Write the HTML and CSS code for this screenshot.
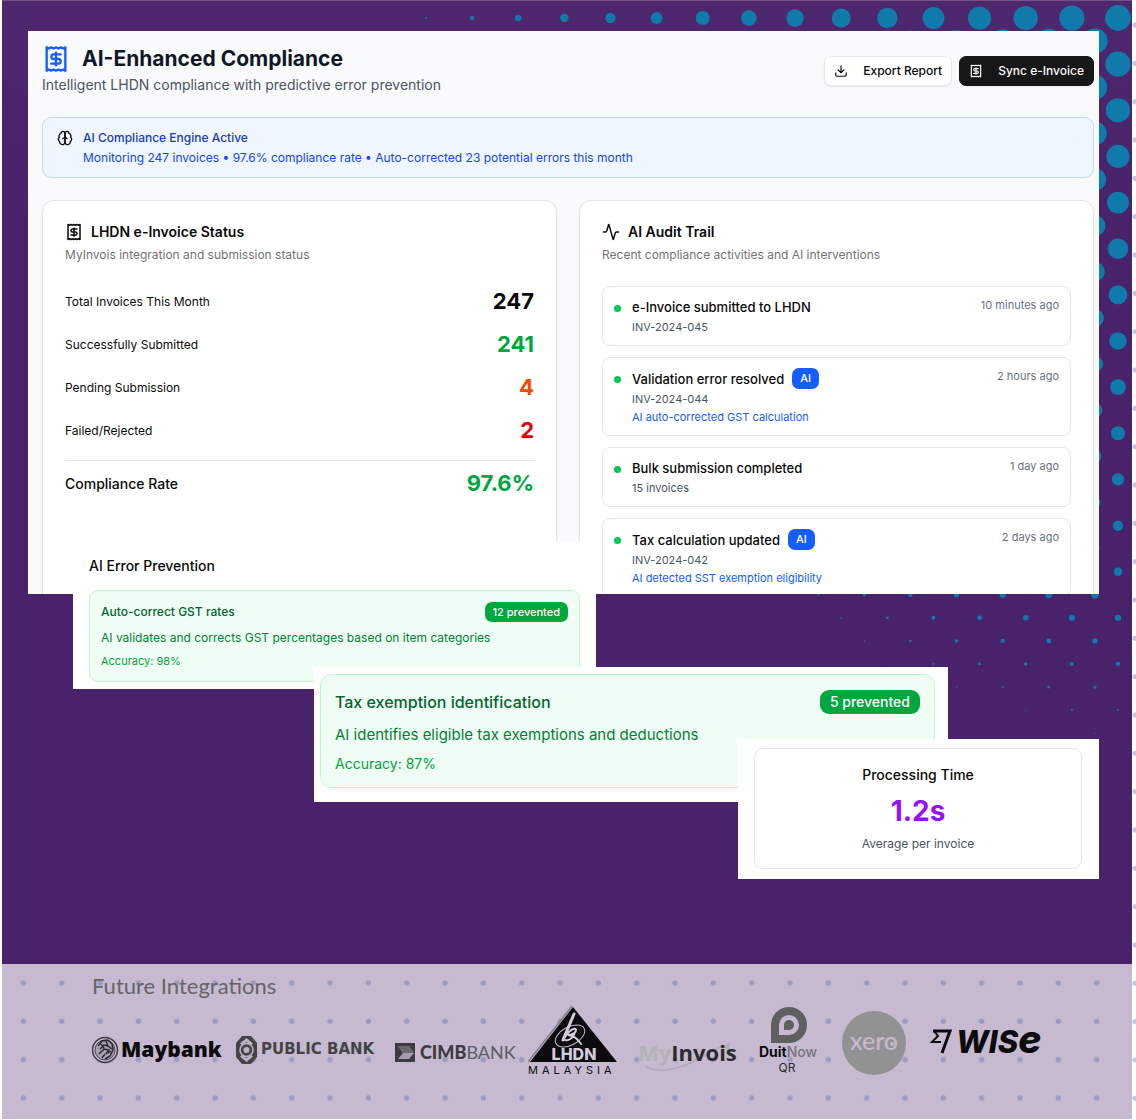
FILE: index.html
```
<!DOCTYPE html>
<html lang="en">
<head>
<meta charset="UTF-8">
<meta name="viewport" content="width=device-width, initial-scale=1">
<title>AI-Enhanced Compliance</title>
<link rel="stylesheet" href="styles.css">
</head>
<body>

<!-- shared icon shapes -->
<svg class="defs" width="0" height="0" aria-hidden="true">
  <symbol id="receipt" viewBox="0 0 24 24">
    <path d="M4 2v20l2-1 2 1 2-1 2 1 2-1 2 1 2-1 2 1V2l-2 1-2-1-2 1-2-1-2 1-2-1-2 1Z"/>
    <path d="M16 8h-6a2 2 0 1 0 0 4h4a2 2 0 1 1 0 4H8"/>
    <path d="M12 17.500v-11"/>
  </symbol>
</svg>

<!-- Dotted paper behind the poster -->
<svg class="paper" aria-hidden="true">
  <pattern id="paper-dots" x="1116" y="6" width="38.330" height="38.330" patternUnits="userSpaceOnUse">
    <circle cx="19" cy="19" r="2.600" fill="#c3c6db"/>
  </pattern>
  <rect width="100%" height="100%" fill="url(#paper-dots)"/>
</svg>

<div class="poster">
  <svg class="halftone" id="halftone" width="760" height="760" aria-hidden="true"></svg>

  <main class="stage">

    <!-- Dashboard -->
    <section class="dashboard">
      <header class="page-head">
        <div>
          <h1><svg class="icon icon-xl" aria-hidden="true"><use href="#receipt"/></svg>AI-Enhanced Compliance</h1>
          <p class="lead">Intelligent LHDN compliance with predictive error prevention</p>
        </div>
        <div class="actions">
          <button class="btn" type="button">
            <svg class="icon" viewBox="0 0 24 24" aria-hidden="true"><path d="M21 15v4a2 2 0 0 1-2 2H5a2 2 0 0 1-2-2v-4M7 10l5 5 5-5M12 15V3"/></svg>
            Export Report
          </button>
          <button class="btn btn-dark" type="button">
            <svg class="icon" aria-hidden="true"><use href="#receipt"/></svg>
            Sync e-Invoice
          </button>
        </div>
      </header>

      <div class="alert">
        <svg class="icon" viewBox="0 0 24 24" aria-hidden="true">
          <path d="M12 5a3 3 0 1 0-5.997.125 4 4 0 0 0-2.526 5.770 4 4 0 0 0 .556 6.588A4 4 0 1 0 12 18Z"/>
          <path d="M12 5a3 3 0 1 1 5.997.125 4 4 0 0 1 2.526 5.770 4 4 0 0 1-.556 6.588A4 4 0 1 1 12 18Z"/>
          <path d="M15 13a4.500 4.500 0 0 1-3-4 4.500 4.500 0 0 1-3 4"/>
        </svg>
        <div>
          <strong>AI Compliance Engine Active</strong>
          <p>Monitoring 247 invoices • 97.6% compliance rate • Auto-corrected 23 potential errors this month</p>
        </div>
      </div>

      <div class="cards">
        <article class="card">
          <h2><svg class="icon icon-md" aria-hidden="true"><use href="#receipt"/></svg>LHDN e-Invoice Status</h2>
          <p class="desc">MyInvois integration and submission status</p>
          <dl class="stats">
            <div><dt>Total Invoices This Month</dt><dd>247</dd></div>
            <div><dt>Successfully Submitted</dt><dd class="green">241</dd></div>
            <div><dt>Pending Submission</dt><dd class="orange">4</dd></div>
            <div><dt>Failed/Rejected</dt><dd class="red">2</dd></div>
            <div class="total"><dt>Compliance Rate</dt><dd class="green">97.6%</dd></div>
          </dl>
        </article>

        <article class="card">
          <h2><svg class="icon icon-md" viewBox="0 0 24 24" aria-hidden="true"><path d="M22 12h-2.480a2 2 0 0 0-1.930 1.460l-2.350 8.360a.25.25 0 0 1-.48 0L9.240 2.180a.25.25 0 0 0-.48 0l-2.350 8.360A2 2 0 0 1 4.490 12H2"/></svg>AI Audit Trail</h2>
          <p class="desc">Recent compliance activities and AI interventions</p>
          <ul class="trail">
            <li>
              <i class="dot"></i>
              <div class="entry"><h3>e-Invoice submitted to LHDN</h3><p>INV-2024-045</p></div>
              <time>10 minutes ago</time>
            </li>
            <li>
              <i class="dot"></i>
              <div class="entry"><h3>Validation error resolved <span class="tag">AI</span></h3><p>INV-2024-044</p><p class="note">AI auto-corrected GST calculation</p></div>
              <time>2 hours ago</time>
            </li>
            <li>
              <i class="dot"></i>
              <div class="entry"><h3>Bulk submission completed</h3><p>15 invoices</p></div>
              <time>1 day ago</time>
            </li>
            <li>
              <i class="dot"></i>
              <div class="entry"><h3>Tax calculation updated <span class="tag">AI</span></h3><p>INV-2024-042</p><p class="note">AI detected SST exemption eligibility</p></div>
              <time>2 days ago</time>
            </li>
          </ul>
        </article>
      </div>
    </section>

    <!-- Overlapping callouts -->
    <section class="callout prevention">
      <h2>AI Error Prevention</h2>
      <div class="rule">
        <div class="rule-head"><h3>Auto-correct GST rates</h3><span class="badge">12 prevented</span></div>
        <p>AI validates and corrects GST percentages based on item categories</p>
        <small>Accuracy: 98%</small>
      </div>
    </section>

    <section class="callout exemption">
      <div class="rule rule-lg">
        <div class="rule-head"><h3>Tax exemption identification</h3><span class="badge">5 prevented</span></div>
        <p>AI identifies eligible tax exemptions and deductions</p>
        <small>Accuracy: 87%</small>
      </div>
    </section>

    <section class="callout timing">
      <div class="metric">
        <h3>Processing Time</h3>
        <strong>1.2s</strong>
        <p>Average per invoice</p>
      </div>
    </section>
  </main>

  <!-- Future integrations -->
  <footer class="integrations">
    <svg class="footer-dots" aria-hidden="true">
      <pattern id="footer-dots" x="2.400" y="0" width="38.330" height="38.330" patternUnits="userSpaceOnUse">
        <circle cx="19" cy="19" r="2.700" fill="#9d9bbf"/>
      </pattern>
      <rect width="100%" height="100%" fill="url(#footer-dots)"/>
    </svg>
    <h2>Future Integrations</h2>
    <div class="logos">
      <svg width="133" height="76" role="img" aria-label="Maybank">
        <circle cx="13" cy="46" r="12.500" fill="#c6b9d0" stroke="#3c3742" stroke-width="1.500"/>
        <circle cx="13" cy="46" r="10" fill="#aaa0b3" stroke="#4b4552" stroke-width="1"/>
        <path d="M6 42l4-5 6-1 4 4 1 6-3 6-5 3M8 45l4-4 4 1M7 50l5-5 5 1-3 4M10 54l3-4M14 37l2 5 4 3M16 49l3-2M9 40l3 4" fill="none" stroke="#2c2831" stroke-width="1.500"/>
        <text x="29" y="53" class="t-maybank">Maybank</text>
      </svg>
      <svg width="147" height="76" role="img" aria-label="Public Bank">
        <path d="M7 32h9l6 7v14l-6 7H7l-6-7V39Z" fill="#444346"/>
        <path d="M11.500 34l6.500 5.500-2 1.500-4.500-3-4.500 3-2-1.500ZM11.500 58l6.500-5.500-2-1.500-4.500 3-4.500-3-2 1.500Z" fill="#bdb1c6"/>
        <circle cx="11.500" cy="46" r="6.500" fill="#444346" stroke="#bdb1c6" stroke-width="1.500"/>
        <circle cx="11.500" cy="46" r="3" fill="#bdb1c6"/>
        <text x="26" y="50" class="t-public">PUBLIC BANK</text>
      </svg>
      <svg width="126" height="76" role="img" aria-label="CIMB Bank">
        <path d="M3 39h20v19H3Z" fill="#3d3b40"/>
        <path d="M6 42h11l5 7-5 6H6l5-6Z" fill="#a69cae"/>
        <path d="M6 42h11l5 7H11Z" fill="#6c6671"/>
        <text x="28" y="55" class="t-cimb">CIMB<tspan class="t-thin">BANK</tspan></text>
      </svg>
      <svg width="99" height="76" role="img" aria-label="LHDN Malaysia">
        <path d="M44 2L0 58" stroke="#857c8c" stroke-width="1.500"/>
        <path d="M45 3L89 58H2Z" fill="#0c0b0d"/>
        <ellipse cx="42" cy="32" rx="16" ry="9" transform="rotate(-28 42 32)" fill="none" stroke="#c6b9d0" stroke-width="1"/>
        <path d="M46 10L35 36" fill="none" stroke="#d5cbdc" stroke-width="3" stroke-linecap="round"/>
        <path d="M37 33c5-8 11-10 11-7 0 3-5 5-8 5 6 1 9 3 13 9M47 28c-2 7-7 9-10 8" fill="none" stroke="#d5cbdc" stroke-width="2" stroke-linecap="round"/>
        <text x="46" y="56" text-anchor="middle" class="t-lhdn">LHDN</text>
        <text x="0" y="70" class="t-malaysia">MALAYSIA</text>
      </svg>
      <svg width="107" height="76" role="img" aria-label="MyInvois">
        <path d="M9 62c5 6 28 6 46-4 18-9 34-22 35-13M87 43l5-3-1 7" fill="none" stroke="#b3acb9" stroke-width="2"/>
        <text x="1" y="57" class="t-myinvois"><tspan fill="#b3b2b6">My</tspan>Invois</text>
      </svg>
      <svg width="74" height="76" role="img" aria-label="DuitNow QR">
        <path d="M17 39V21a18 18 0 1 1 18 18Z" fill="#5f5e61"/>
        <path d="M25 31V21a10 10 0 1 1 10 10Z" fill="#c6b9d0"/>
        <path d="M30 26v-5a5 5 0 1 1 5 5Z" fill="#5f5e61"/>
        <text x="5" y="53" class="t-duit">Duit<tspan class="t-now">Now</tspan></text>
        <text x="33" y="68" text-anchor="middle" class="t-qr">QR</text>
      </svg>
      <svg width="76" height="76" role="img" aria-label="Xero">
        <circle cx="36" cy="39" r="32" fill="#929293"/>
        <text x="36" y="46" text-anchor="middle" class="t-xero">xero</text>
        <circle cx="54" cy="40" r="2" fill="#c6b9d0"/>
      </svg>
      <svg width="120" height="76" role="img" aria-label="Wise">
        <path d="M9 27H26L18 49" fill="none" stroke="#0c0b0d" stroke-width="3"/>
        <path d="M10 27l4 5-6 6h9" fill="none" stroke="#0c0b0d" stroke-width="2"/>
        <text x="32" y="49" class="t-wise">WIS<tspan class="t-e">e</tspan></text>
      </svg>
    </div>
  </footer>
</div>

<script>
// halftone: dots shrink away from the top right corner
const svg = document.getElementById("halftone");
const step = 23.07;
const reach = 740;

for (let row = 0; row < 33; row++) {
  for (let col = row % 2; col < 33; col += 2) {
    const dx = col * step;
    const dy = row * step;
    const d = Math.pow(Math.pow(dx, 1.6) + Math.pow(dy, 1.6), 1 / 1.6);
    const r = 12.9 * (1 - Math.pow(d / reach, 1.35));
    if (!(r > 0.4)) continue;
    const c = document.createElementNS("http://www.w3.org/2000/svg", "circle");
    c.setAttribute("cx", 746 - dx);
    c.setAttribute("cy", 18 + dy);
    c.setAttribute("r", r);
    svg.appendChild(c);
  }
}
</script>

</body>
</html>
```
FILE: styles.css
```
* { box-sizing: border-box; }

body {
  margin: 0;
  background: white;
  font-family: Inter, sans-serif;
  font-size: 12px;
  line-height: 20px;
  color: #0a0a0a;
}

h1, h2, h3, p, dl, dd, ul { margin: 0; padding: 0; }

.defs { position: absolute; }

.paper {
  position: absolute;
  top: 0;
  left: 0;
  width: 100%;
  height: 100%;
}

.poster {
  position: relative;
  display: flex;
  flex-direction: column;
  min-height: 1119px;
  margin: 0 4px 0 2px;
  border-top: 1px solid #735289;
  background: linear-gradient(#4d286e, #48236b 20%);
}

.halftone {
  position: absolute;
  top: -1px;
  right: 0;
  fill: #107bab;
}

.stage {
  position: relative;
  flex: 1;
  padding: 30px 33px 0 26px;
}

/* Icons */
.icon {
  width: 16px;
  height: 16px;
  flex: none;
  fill: none;
  stroke: currentColor;
  stroke-width: 2;
  stroke-linecap: round;
  stroke-linejoin: round;
}
.icon-md { width: 18px; height: 18px; }
.icon-xl { width: 28px; height: 28px; color: #155dfc; }

/* Dashboard */
.dashboard {
  position: relative;
  height: 563px;
  overflow: hidden;
  padding: 14px 5px 0 14px;
  background: #f9fafb;
}

.page-head {
  display: flex;
  justify-content: space-between;
  align-items: center;
}

h1 {
  display: flex;
  align-items: center;
  gap: 12px;
  font-size: 21px;
  line-height: 28px;
  font-weight: 700;
  color: #101828;
}

.lead {
  font-size: 14px;
  line-height: 24px;
  color: #4a5565;
}

.actions { display: flex; gap: 7px; }

.btn {
  display: flex;
  align-items: center;
  gap: 15px;
  padding: 4px 9px;
  border: 1px solid #e8e8ea;
  border-radius: 7px;
  background: white;
  font: 500 12px/20px Inter, sans-serif;
  color: #0a0a0a;
  box-shadow: 0 1px 2px rgba(0,0,0,0.06);
}
.btn .icon { width: 14px; height: 14px; }
.btn-dark {
  background: #171717;
  border-color: #171717;
  color: #fafafa;
}

.alert {
  display: flex;
  gap: 10px;
  margin-top: 20px;
  padding: 10px 14px 9px;
  border: 1px solid #bedbff;
  border-radius: 9px;
  background: #eff6ff;
  color: #1447e6;
}
.alert .icon { margin-top: 2px; color: #0a0a0a; }
.alert strong {
  display: block;
  font-weight: 500;
  color: #193cb8;
}

.cards {
  display: grid;
  grid-template-columns: 1fr 1fr;
  gap: 22px;
  margin-top: 22px;
}

.card {
  min-height: 480px;
  padding: 20px 22px;
  border: 1px solid #e5e5e5;
  border-radius: 12px;
  background: white;
  box-shadow: 0 1px 3px rgba(0,0,0,0.08);
}
.card h2 {
  display: flex;
  align-items: center;
  gap: 8px;
  font-size: 14px;
  line-height: 22px;
  font-weight: 600;
}
.desc { line-height: 24px; color: #737373; }

.stats { margin-top: 20px; }
.stats div {
  display: flex;
  justify-content: space-between;
  align-items: center;
  margin-bottom: 14px;
}
.stats dd {
  font-size: 22px;
  line-height: 29px;
  font-weight: 700;
}
.stats .total {
  margin-top: 15px;
  padding-top: 8px;
  border-top: 1px solid #e5e5e5;
}
.total dt { font-size: 14px; font-weight: 500; }
.green { color: #00a63e; }
.orange { color: #f54900; }
.red { color: #e7000b; }

.trail {
  display: flex;
  flex-direction: column;
  gap: 11px;
  margin-top: 19px;
  list-style: none;
}
.trail li {
  display: flex;
  gap: 11px;
  padding: 10px 11px 9px;
  border: 1px solid #e5e7eb;
  border-radius: 8px;
}
.dot {
  width: 7px;
  height: 7px;
  margin-top: 8px;
  border-radius: 50%;
  background: #00c950;
}
.entry { flex: 1; font-size: 11px; line-height: 18px; color: #4a5565; }
.entry h3 {
  display: flex;
  align-items: center;
  gap: 8px;
  margin-bottom: 1px;
  font-size: 13px;
  line-height: 20px;
  font-weight: 500;
  color: #0a0a0a;
}
.entry .note { color: #155dfc; }
.tag {
  padding: 1px 8px;
  border-radius: 7px;
  background: #155dfc;
  font-size: 11px;
  line-height: 19px;
  color: white;
}
.trail time { font-size: 11px; line-height: 16px; color: #6a7282; }

/* Callouts */
.callout {
  position: absolute;
  background: white;
}
.prevention {
  top: 541px;
  left: 71px;
  width: 523px;
  padding: 12px 16px 7px;
}
.exemption {
  top: 666px;
  left: 312px;
  width: 634px;
  padding: 7px 13px 14px 6px;
}
.timing {
  top: 738px;
  right: 33px;
  width: 361px;
  padding: 9px 17px 10px 16px;
}

.callout h2 {
  margin-bottom: 12px;
  font-size: 14px;
  line-height: 24px;
  font-weight: 500;
}

.rule {
  padding: 11px;
  border: 1px solid #b9f8cf;
  border-radius: 9px;
  background: #f0fdf4;
  color: #008236;
}
.rule-head {
  display: flex;
  justify-content: space-between;
  align-items: center;
}
.rule h3 {
  font-size: 12px;
  font-weight: 500;
  color: #016630;
}
.rule p { margin: 6px 0 4px; }
.rule small {
  display: block;
  font-size: 11px;
  line-height: 18px;
  color: #00a63e;
}
.badge {
  padding: 0 8px;
  border-radius: 7px;
  background: #00a63e;
  font-size: 11px;
  font-weight: 500;
  color: white;
}

.rule-lg { padding: 15px 14px 13px; border-radius: 12px; }
.rule-lg h3 { font-size: 16px; line-height: 24px; }
.rule-lg p { margin: 9px 0 7px; font-size: 15px; line-height: 24px; }
.rule-lg small { font-size: 14px; line-height: 20px; }
.rule-lg .badge {
  padding: 2px 10px;
  border-radius: 9px;
  font-size: 14px;
}

.metric {
  padding: 15px 15px 14px;
  border: 1px solid #e5e7eb;
  border-radius: 9px;
  text-align: center;
  color: #4a5565;
}
.metric h3 {
  font-size: 14px;
  line-height: 22px;
  font-weight: 500;
  color: #0a0a0a;
}
.metric strong {
  display: block;
  margin: 7px 0 5px;
  font-size: 28px;
  line-height: 36px;
  font-weight: 700;
  color: #9810fa;
}

/* Integrations */
.integrations {
  position: relative;
  padding: 8px 90px 39px;
  background: #c6b9d0;
}
.footer-dots {
  position: absolute;
  top: 0;
  left: 0;
  width: 100%;
  height: 100%;
}
.integrations h2 {
  position: relative;
  font: 400 22px/28px Lato, sans-serif;
  color: #666468;
}
.logos {
  position: relative;
  display: flex;
  gap: 10px;
  margin-top: 4px;
}
.logos svg { flex: none; }

.t-maybank { font: 800 21px "Open Sans", sans-serif; fill: #0c0b0d; }
.t-public { font: 700 15px "DejaVu Sans", sans-serif; fill: #444346; }
.t-cimb { font: 900 18px Lato, sans-serif; fill: #3d3b40; }
.t-thin { font-weight: 400; fill: #5f5b64; }
.t-lhdn { font: 800 16px Inter, sans-serif; fill: #d5cbdc; }
.t-malaysia { font: 400 11px Inter, sans-serif; letter-spacing: 4px; fill: #0c0b0d; }
.t-myinvois { font: 700 22px "Open Sans", sans-serif; fill: #2b2a2d; }
.t-duit { font: 700 14px Inter, sans-serif; fill: #0c0b0d; }
.t-now { font-weight: 500; fill: #77747b; }
.t-qr { font: 400 12px Inter, sans-serif; fill: #2b2a2d; }
.t-xero { font: 500 25px Lato, sans-serif; fill: #c6b9d0; }
.t-wise { font: italic 800 31px Inter, sans-serif; fill: #0c0b0d; }
.t-e { font-size: 39px; }
```
